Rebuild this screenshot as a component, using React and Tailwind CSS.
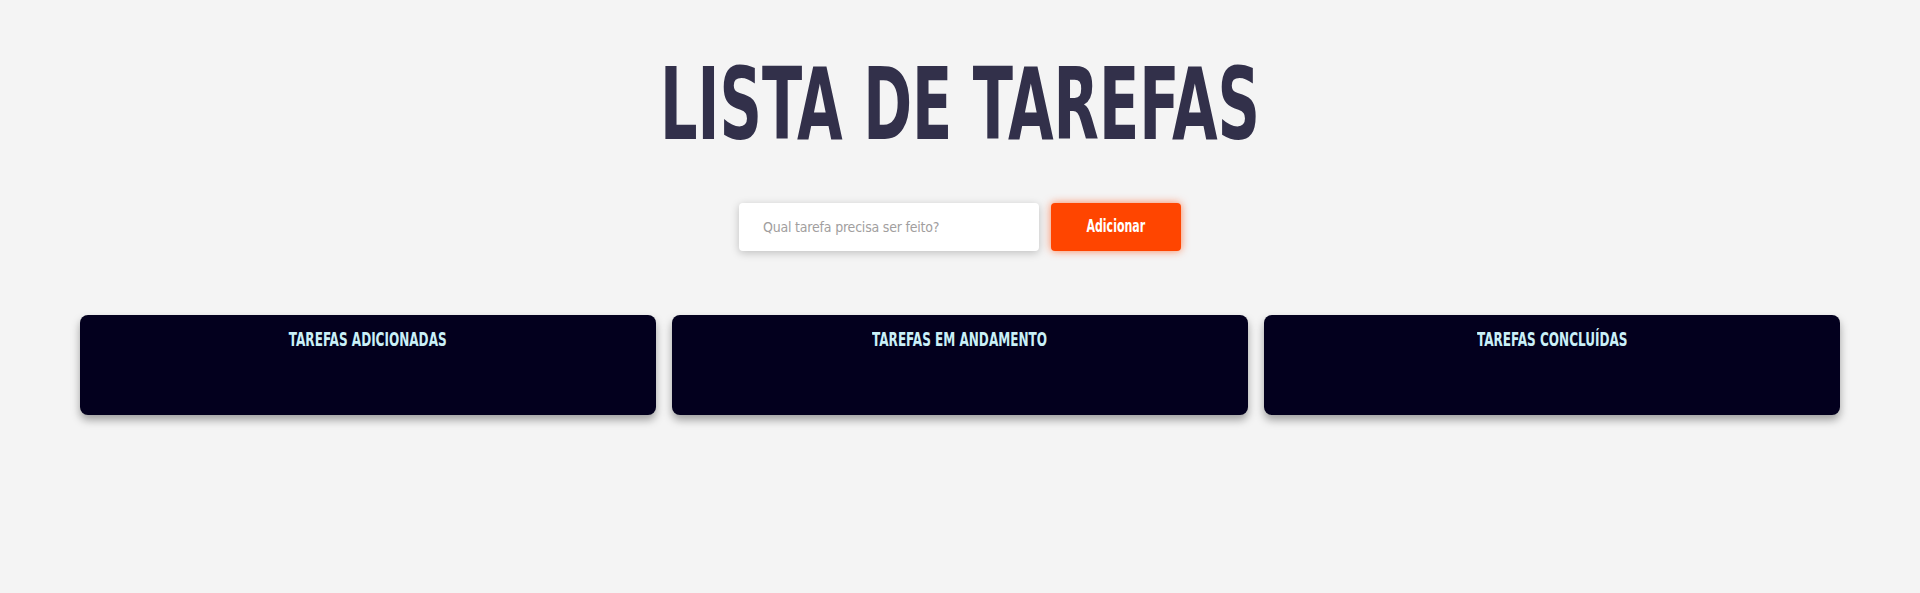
import React from "react";

const FONT = { fontFamily: '"Liberation Sans Narrow", "DejaVu Sans Condensed", "Liberation Sans", sans-serif' };

function Column({ title }) {
  return (
    <div className="h-[100px] rounded-lg bg-[#03001e] shadow-[0_5px_8px_rgba(0,0,0,0.35)] pt-[14px] text-center">
      <h2 className="inline-block origin-center scale-x-[0.67] text-[20px] font-bold leading-none text-[#caf0f8]">
        {title}
      </h2>
    </div>
  );
}

export default function App() {
  return (
    <div className="min-h-[593px] bg-[#f4f4f4]" style={FONT}>
      <div className="pt-[55px] text-center">
        <h1 className="inline-block origin-center scale-x-[0.655] text-[100px] font-bold leading-none text-[#32304a]">
          LISTA DE TAREFAS
        </h1>
      </div>
      <div className="mt-[48px] flex justify-center gap-3">
        <input
          type="text"
          placeholder="Qual tarefa precisa ser feito?"
          className="h-12 w-[300px] rounded bg-white px-6 text-[14px] tracking-[-0.2px] text-[#32304a] shadow-[0_2px_8px_rgba(0,0,0,0.22)] outline-none placeholder:text-[#a19e9e]"
          style={FONT}
        />
        <button
          type="button"
          className="h-12 w-[130px] rounded bg-[#ff4500] text-[17px] font-bold text-white shadow-[0_0_8px_rgba(255,69,0,0.65)]"
          style={FONT}
        >
          <span className="inline-block origin-center scale-x-[0.72]">Adicionar</span>
        </button>
      </div>
      <div className="mt-16 grid grid-cols-3 gap-4 px-20">
        <Column title="TAREFAS ADICIONADAS" />
        <Column title="TAREFAS EM ANDAMENTO" />
        <Column title="TAREFAS CONCLUÍDAS" />
      </div>
    </div>
  );
}
